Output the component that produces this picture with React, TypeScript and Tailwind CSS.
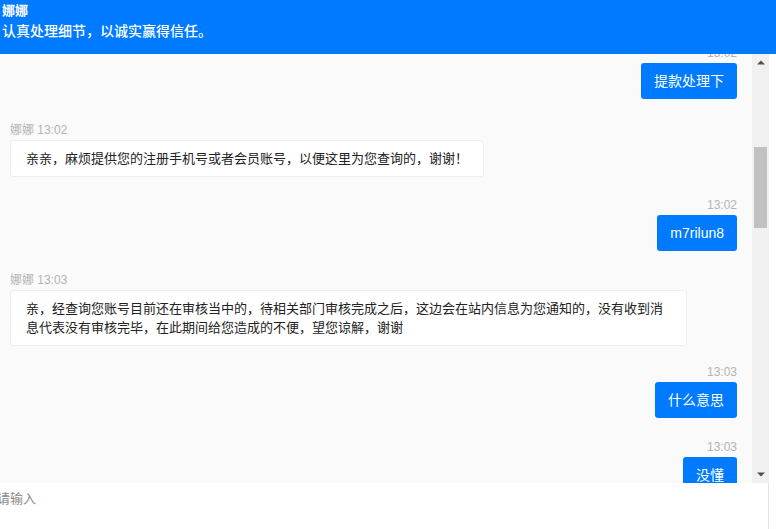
import React from "react";

type Msg = { side: "right" | "left"; time: string; text: string; mt: string };

const messages: Msg[] = [
  { side: "right", time: "13:02", text: "提款处理下", mt: "mt-0" },
  {
    side: "left",
    time: "13:02",
    text: "亲亲，麻烦提供您的注册手机号或者会员账号，以便这里为您查询的，谢谢！",
    mt: "mt-[22px]",
  },
  { side: "right", time: "13:02", text: "m7rilun8", mt: "mt-[19px]" },
  {
    side: "left",
    time: "13:03",
    text: "亲，经查询您账号目前还在审核当中的，待相关部门审核完成之后，这边会在站内信息为您通知的，没有收到消息代表没有审核完毕，在此期间给您造成的不便，望您谅解，谢谢",
    mt: "mt-[20px]",
  },
  { side: "right", time: "13:03", text: "什么意思", mt: "mt-[17px]" },
  { side: "right", time: "13:03", text: "没懂", mt: "mt-[20px]" },
];

export default function App() {
  return (
    <div
      className="w-[776px] h-[529px] flex flex-col bg-white overflow-hidden"
      style={{ fontFamily: '"Liberation Sans", "Noto Sans CJK SC", sans-serif' }}
    >
      <header className="h-[54px] shrink-0 bg-[#007bff] text-white pl-[2px] pt-[2px]">
        <div className="text-[13px] leading-[17px] font-bold">娜娜</div>
        <div className="text-[14px] leading-[20px] mt-[2px] font-medium">认真处理细节，以诚实赢得信任。</div>
      </header>

      <div className="flex flex-1 min-h-0">
        <div className="flex-1 min-w-0 bg-[#fafafa] overflow-hidden">
          <div className="mt-[-10px] pl-[10px] pr-[15px] flex flex-col">
            {messages.map((m, i) =>
              m.side === "right" ? (
                <div key={i} className={`${m.mt} flex flex-col items-end`}>
                  <div className="h-[18px] leading-[18px] text-[12px] text-[#b3b3b3]">{m.time}</div>
                  <div className="mt-px bg-[#007bff] text-white text-[14px] leading-[20px] px-[13px] py-[8px] rounded-[3px]">
                    {m.text}
                  </div>
                </div>
              ) : (
                <div key={i} className={`${m.mt} flex flex-col items-start`}>
                  <div className="h-[18px] leading-[18px] text-[12px] text-[#b3b3b3]">娜娜 {m.time}</div>
                  <div className="mt-px max-w-[677px] bg-white border border-[#eeeeee] rounded-[3px] text-[13px] leading-[19px] text-[#222] px-[15px] py-[8px]">
                    {m.text}
                  </div>
                </div>
              )
            )}
          </div>
        </div>

        <div className="w-[17px] shrink-0 bg-[#f1f1f1] flex flex-col">
          <div className="h-[17px] flex items-center justify-center">
            <svg width="8" height="5" viewBox="0 0 8 5">
              <path d="M0 4.5 L4 0.5 L8 4.5 Z" fill="#505050" />
            </svg>
          </div>
          <div className="flex-1 px-[2px] pt-[76px]">
            <div className="h-[81px] bg-[#c1c1c1]" />
          </div>
          <div className="h-[17px] flex items-center justify-center">
            <svg width="8" height="5" viewBox="0 0 8 5">
              <path d="M0 0.5 L4 4.5 L8 0.5 Z" fill="#505050" />
            </svg>
          </div>
        </div>
        <div className="w-[7px] shrink-0 bg-white" />
      </div>

      <div className="h-[46px] shrink-0 flex bg-white">
        <div className="flex-1 min-w-0 border-r border-[#e5e5e5] mr-[7px] overflow-hidden">
          <div className="ml-[-3px] pt-[7px] text-[13px] leading-[18px] text-[#8a8a8a]">请输入</div>
        </div>
      </div>
    </div>
  );
}
